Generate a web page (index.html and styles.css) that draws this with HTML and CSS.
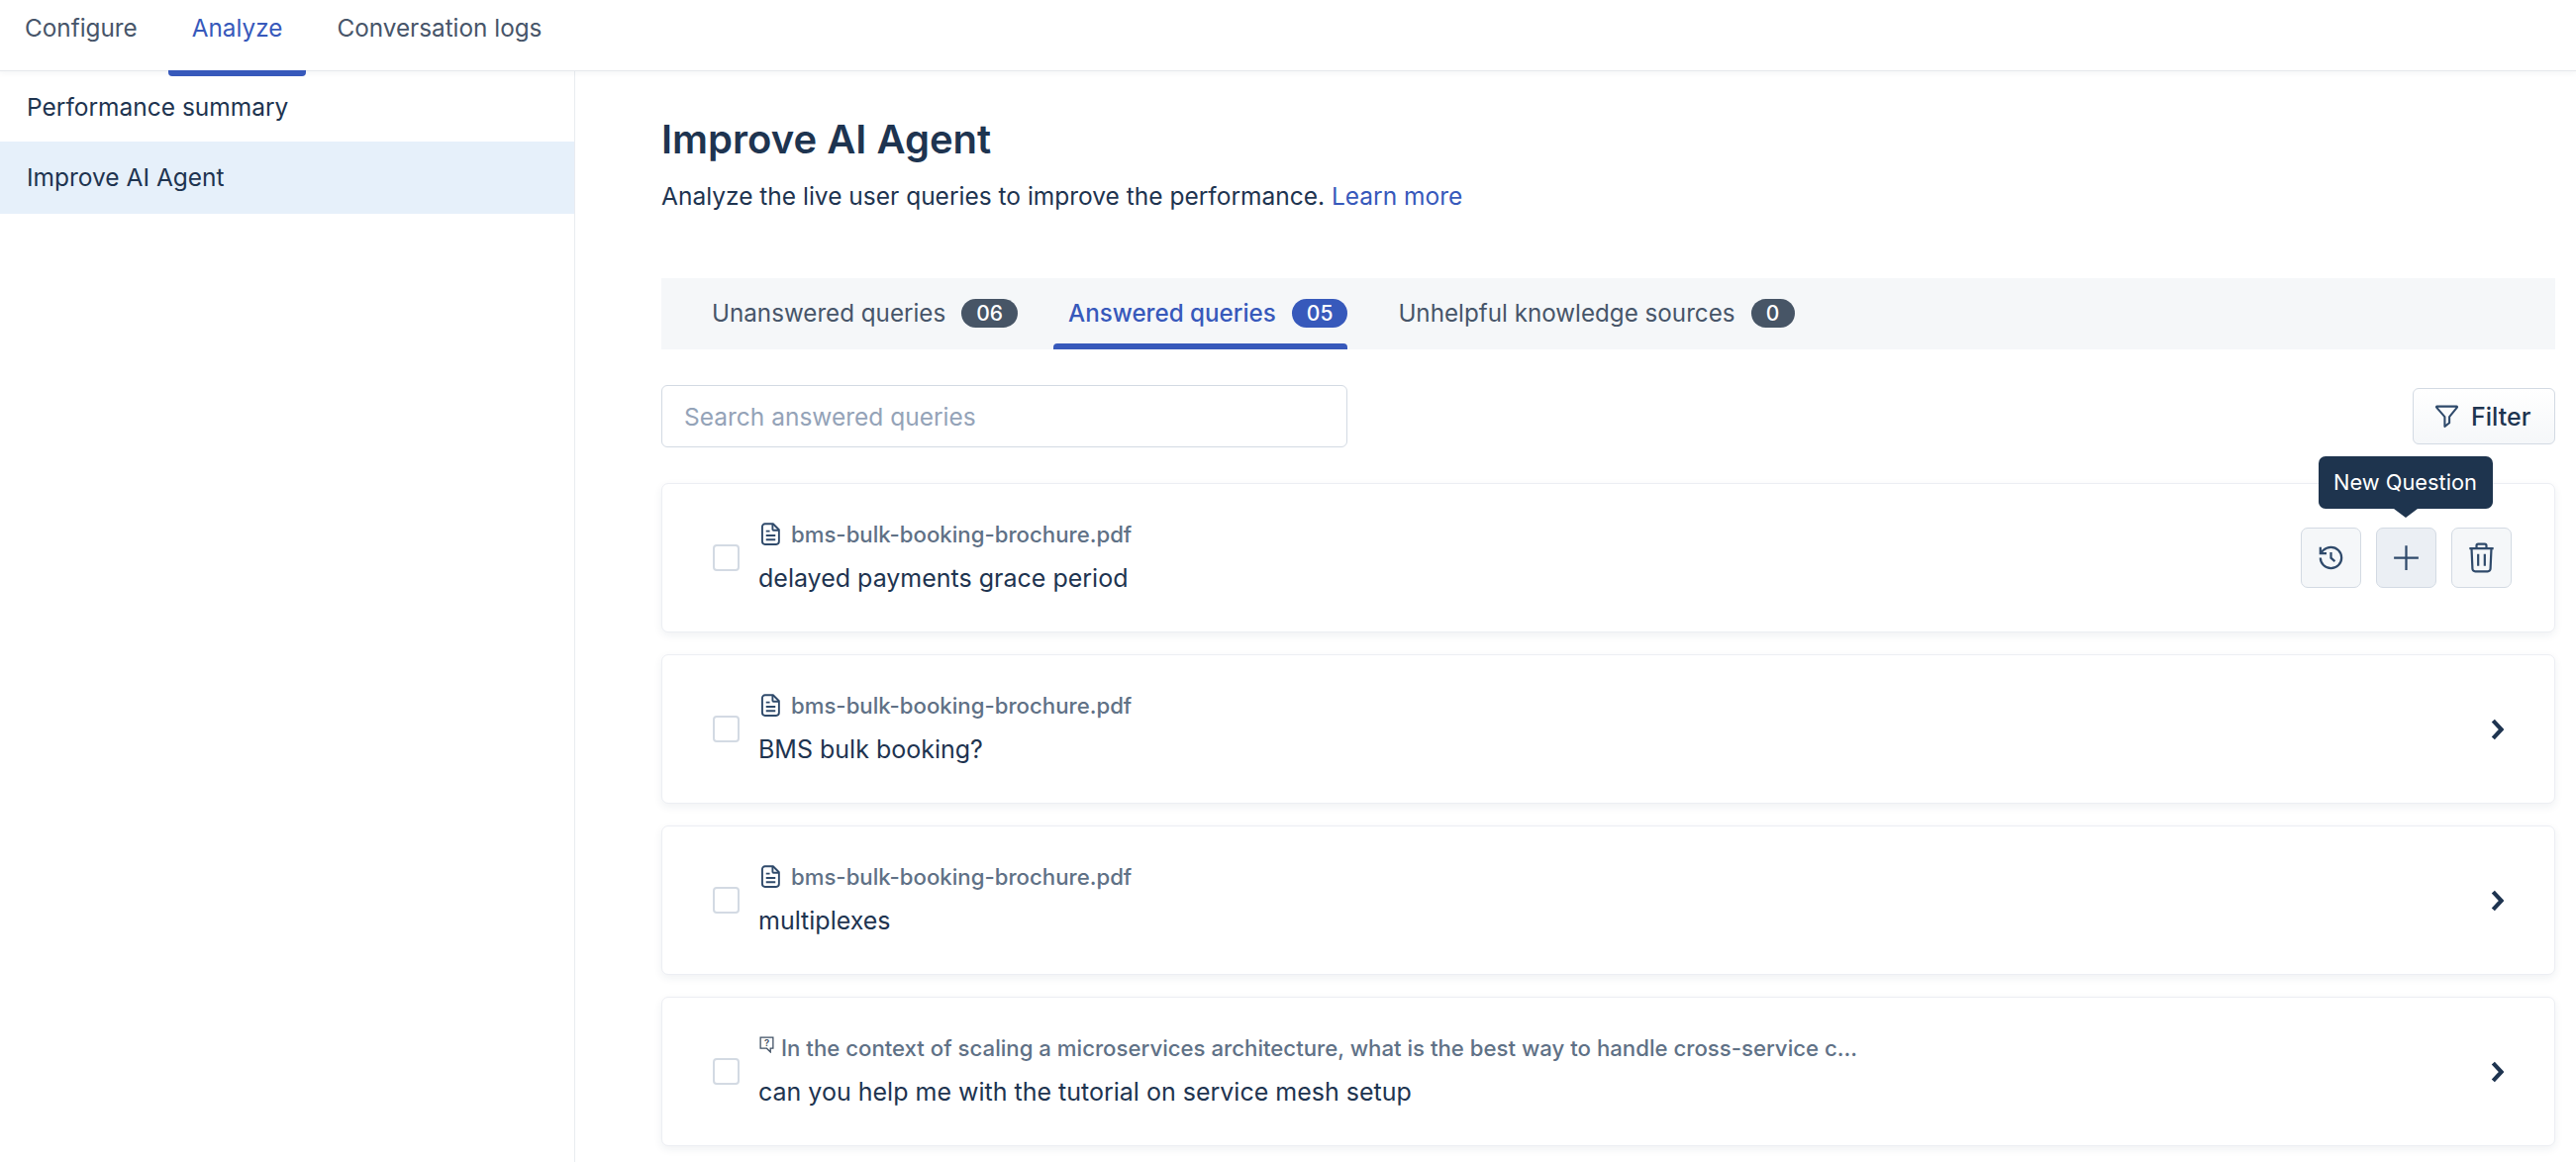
FILE: index.html
```html
<!DOCTYPE html>
<html lang="en">
<head>
  <meta charset="UTF-8">
  <meta name="viewport" content="width=device-width, initial-scale=1.0">
  <title>Improve AI Agent</title>
  <link rel="stylesheet" href="styles.css">
</head>
<body>
  <header class="topbar">
    <a class="top-tab">Configure</a>
    <a class="top-tab active">Analyze</a>
    <a class="top-tab">Conversation logs</a>
  </header>

  <div class="layout">
    <nav class="sidebar">
      <a class="side-item">Performance summary</a>
      <a class="side-item active">Improve AI Agent</a>
    </nav>

    <main class="content">
      <h1>Improve AI Agent</h1>
      <p class="subtitle">Analyze the live user queries to improve the performance. <a class="link">Learn more</a></p>

      <div class="query-tabs">
        <a class="query-tab">Unanswered queries <span class="badge">06</span></a>
        <a class="query-tab active">Answered queries <span class="badge">05</span></a>
        <a class="query-tab">Unhelpful knowledge sources <span class="badge">0</span></a>
      </div>

      <div class="toolbar">
        <input class="search" type="text" placeholder="Search answered queries">
        <button class="filter-btn">
          <svg class="filter-icon" viewBox="0 0 24 24"><path d="M2.500 2.500h19a.6.6 0 0 1 .45 1L14.500 12.600v5.900l-4.500 3.500v-9.400L2.050 3.500a.6.6 0 0 1 .45-1z"/></svg>
          Filter
        </button>
      </div>

      <div class="cards">
        <div class="card">
          <span class="checkbox"></span>
          <div class="card-text">
            <div class="meta">
              <svg class="file-icon" viewBox="0 0 20 24"><path d="M4 1.200h8.500L18.800 7.500V20a3 3 0 0 1-3 3H4a3 3 0 0 1-3-3V4.200a3 3 0 0 1 3-3z"/><path d="M12 1.500V7a1 1 0 0 0 1 1h5.500M5 9h4M5 13.500h10M5 18h10"/></svg>
              bms-bulk-booking-brochure.pdf
            </div>
            <div class="question">delayed payments grace period</div>
          </div>
          <div class="actions">
            <button class="icon-btn">
              <svg class="icon" viewBox="0 0 24 24"><path d="M2.500 12a9.500 9.500 0 1 0 9.500-9.500 10 10 0 0 0-7 2.900L2.500 8"/><path d="M2.500 2.500V8H8M12 7v5.200l3.500 3"/></svg>
            </button>
            <button class="icon-btn hovered">
              <svg class="icon" viewBox="0 0 24 24"><path d="M12 1v22M1 12h22"/></svg>
              <span class="tooltip">New Question</span>
            </button>
            <button class="icon-btn">
              <svg class="icon trash" viewBox="0 0 24 28"><path d="M1 5.500h22M7.500 5V3A1.500 1.500 0 0 1 9 1.500h6A1.500 1.500 0 0 1 16.500 3v2M3 6l.8 18a2.500 2.500 0 0 0 2.500 2.500h11.400a2.500 2.500 0 0 0 2.500-2.500L21 6M9 10.500v11M15 10.500v11"/></svg>
            </button>
          </div>
        </div>

        <div class="card">
          <span class="checkbox"></span>
          <div class="card-text">
            <div class="meta">
              <svg class="file-icon" viewBox="0 0 20 24"><path d="M4 1.200h8.500L18.800 7.500V20a3 3 0 0 1-3 3H4a3 3 0 0 1-3-3V4.200a3 3 0 0 1 3-3z"/><path d="M12 1.500V7a1 1 0 0 0 1 1h5.500M5 9h4M5 13.500h10M5 18h10"/></svg>
              bms-bulk-booking-brochure.pdf
            </div>
            <div class="question">BMS bulk booking?</div>
          </div>
          <svg class="chevron" viewBox="0 0 12 21"><path d="M2 2l8 8.500-8 8.500"/></svg>
        </div>

        <div class="card">
          <span class="checkbox"></span>
          <div class="card-text">
            <div class="meta">
              <svg class="file-icon" viewBox="0 0 20 24"><path d="M4 1.200h8.500L18.800 7.500V20a3 3 0 0 1-3 3H4a3 3 0 0 1-3-3V4.200a3 3 0 0 1 3-3z"/><path d="M12 1.500V7a1 1 0 0 0 1 1h5.500M5 9h4M5 13.500h10M5 18h10"/></svg>
              bms-bulk-booking-brochure.pdf
            </div>
            <div class="question">multiplexes</div>
          </div>
          <svg class="chevron" viewBox="0 0 12 21"><path d="M2 2l8 8.500-8 8.500"/></svg>
        </div>

        <div class="card">
          <span class="checkbox"></span>
          <div class="card-text">
            <div class="meta tight">
              <svg class="bubble-icon" viewBox="0 0 14 16"><path d="M1 1h12v10.500h-2.500V15L7 11.500H1z"/><text x="7" y="9.500" text-anchor="middle">?</text></svg>
              In the context of scaling a microservices architecture, what is the best way to handle cross-service c...
            </div>
            <div class="question">can you help me with the tutorial on service mesh setup</div>
          </div>
          <svg class="chevron" viewBox="0 0 12 21"><path d="M2 2l8 8.500-8 8.500"/></svg>
        </div>
      </div>
    </main>
  </div>
</body>
</html>
```

FILE: styles.css
```css
* {
  box-sizing: border-box;
}
html, body {
  height: 100%;
}
body {
  margin: 0;
  overflow: hidden;
  display: flex;
  flex-direction: column;
  font-family: Inter, "Liberation Sans", sans-serif;
  font-size: 24.5px;
  color: #1e3450;
  background: #fff;
}
.topbar {
  position: relative;
  z-index: 2;
  flex: none;
  display: flex;
  gap: 7px;
  height: 72px;
  padding-left: 1px;
  background: #fff;
  border-bottom: 1px solid #e5e8ec;
  box-shadow: 0 2px 6px rgba(30, 52, 80, 0.05);
}
.top-tab {
  position: relative;
  padding: 0 24px;
  font-size: 24.3px;
  line-height: 57px;
  color: #475569;
}
.top-tab.active {
  color: #3759bb;
}
.top-tab.active::after {
  content: "";
  position: absolute;
  left: 0;
  right: 0;
  bottom: -6px;
  height: 6px;
  background: #3759bb;
  border-radius: 0 0 4px 4px;
}
.layout {
  flex: 1;
  display: flex;
  min-height: 0;
}
.sidebar {
  flex: none;
  width: 581px;
  border-right: 1px solid #e9ecf0;
}
.side-item {
  display: block;
  height: 71px;
  padding-left: 27px;
  line-height: 72px;
}
.side-item.active {
  height: 73px;
  line-height: 73px;
  background: #e6f0fa;
}
.content {
  flex: 1;
  min-width: 0;
  padding: 44px 21px 0 87px;
}
h1 {
  margin: 0;
  font-size: 40px;
  line-height: 50px;
  font-weight: 600;
}
.subtitle {
  margin: 14px 0 0;
  line-height: 36px;
}
.link {
  color: #3759bb;
}
.query-tabs {
  display: flex;
  gap: 36px;
  height: 72px;
  margin-top: 65px;
  padding-left: 36px;
  background: #f5f7f9;
}
.query-tab {
  position: relative;
  display: flex;
  align-items: center;
  gap: 16px;
  height: 72px;
  padding: 0 0 2px 15px;
  font-size: 24.2px;
  color: #475569;
}
.query-tab.active {
  color: #3759bb;
  font-weight: 500;
}
.query-tab.active::after {
  content: "";
  position: absolute;
  left: 0;
  right: 0;
  bottom: 0;
  height: 6px;
  background: #3759bb;
  border-radius: 4px 4px 0 0;
}
.badge {
  min-width: 44px;
  height: 29px;
  padding: 0 15px;
  border-radius: 15px;
  background: #475566;
  color: #fff;
  font-size: 21px;
  font-weight: 500;
  line-height: 29px;
  text-align: center;
}
.query-tab.active .badge {
  background: #3759bb;
}
.toolbar {
  display: flex;
  align-items: center;
  justify-content: space-between;
  height: 63px;
  margin-top: 36px;
}
.search {
  width: 693px;
  height: 63px;
  padding: 0 22px;
  border: 1px solid #d3dae3;
  border-radius: 6px;
  outline: none;
  font-family: inherit;
  font-size: 24.5px;
  color: #1e3450;
}
.search::placeholder {
  color: #94a3b8;
}
.filter-btn {
  display: flex;
  align-items: center;
  gap: 12px;
  width: 144px;
  height: 57px;
  padding: 0 0 0 21px;
  border: 1px solid #d3dae3;
  border-radius: 6px;
  background: linear-gradient(#fff, #f5f7f9);
  font-family: inherit;
  font-size: 25px;
  font-weight: 500;
  color: #1e3450;
}
.filter-icon {
  width: 25px;
  height: 25px;
  fill: none;
  stroke: #2f4a6b;
  stroke-width: 2;
  stroke-linejoin: round;
}
.cards {
  display: flex;
  flex-direction: column;
  gap: 22px;
  margin-top: 36px;
}
.card {
  display: flex;
  align-items: center;
  height: 151px;
  padding-left: 51px;
  border: 1px solid #eceef3;
  border-radius: 7px;
  background: #fff;
  box-shadow: 0 3px 8px rgba(30, 52, 80, 0.07);
}
.checkbox {
  flex: none;
  width: 27px;
  height: 27px;
  border: 2px solid #d3dae3;
  border-radius: 4px;
  background: #fff;
}
.card-text {
  flex: 1;
  min-width: 0;
  margin-top: -4px;
  margin-left: 19px;
}
.meta {
  display: flex;
  align-items: center;
  gap: 11px;
  height: 36px;
  padding-left: 3px;
  font-size: 22.2px;
  font-weight: 500;
  color: #5f7186;
  white-space: nowrap;
}
.meta.tight {
  gap: 7px;
  padding-left: 1px;
}
.file-icon {
  flex: none;
  width: 19px;
  height: 23px;
  fill: none;
  stroke: #2f4a6b;
  stroke-width: 2;
  stroke-linejoin: round;
}
.bubble-icon {
  flex: none;
  width: 15px;
  height: 17px;
  margin-top: -6px;
  fill: none;
  stroke: #3f4f63;
  stroke-width: 1.2;
}
.bubble-icon text {
  fill: #3f4f63;
  stroke: none;
  font-size: 9px;
  font-weight: 600;
}
.question {
  margin-top: 9px;
  font-size: 25px;
  line-height: 36px;
}
.actions {
  flex: none;
  display: flex;
  gap: 15px;
  margin-right: 43px;
  margin-top: -1px;
}
.icon-btn {
  position: relative;
  display: flex;
  align-items: center;
  justify-content: center;
  width: 61px;
  height: 61px;
  padding: 0;
  border: 1px solid #d3dae3;
  border-radius: 7px;
  background: #f5f7f9;
}
.icon-btn.hovered {
  background: #ebeff4;
}
.icon {
  width: 27px;
  height: 27px;
  fill: none;
  stroke: #2f4a6b;
  stroke-width: 2;
}
.icon.trash {
  height: 31px;
}
.tooltip {
  position: absolute;
  left: 50%;
  bottom: 79px;
  transform: translateX(-50%);
  margin-left: -1px;
  width: 176px;
  height: 53px;
  border-radius: 7px;
  background: #1e344e;
  color: #fff;
  font-family: Inter, "Liberation Sans", sans-serif;
  font-size: 21.8px;
  line-height: 53px;
  text-align: center;
  white-space: nowrap;
}
.tooltip::after {
  content: "";
  position: absolute;
  left: 50%;
  top: 100%;
  margin-left: -12px;
  border-left: 12px solid transparent;
  border-right: 12px solid transparent;
  border-top: 9px solid #1e344e;
}
.chevron {
  flex: none;
  width: 13px;
  height: 22px;
  margin-right: 51px;
  fill: none;
  stroke: #1e3450;
  stroke-width: 4;
}
```
